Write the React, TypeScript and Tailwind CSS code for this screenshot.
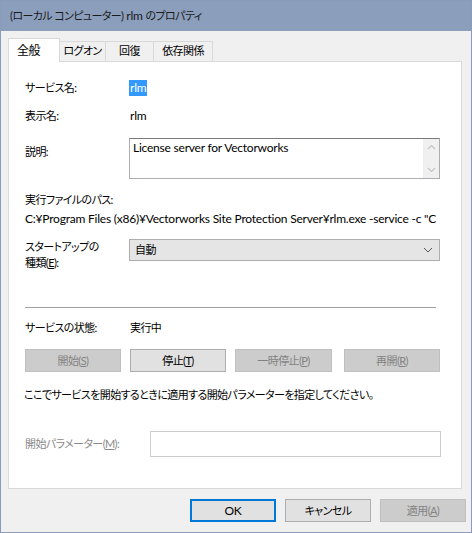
import React from "react";

const F: React.CSSProperties = { fontFamily: 'Lato, "Noto Sans CJK JP", sans-serif', fontFeatureSettings: '"palt"' };

function L({ children }: { children: React.ReactNode }) {
  return <span className="text-[12px] tracking-[-0.22px]">{children}</span>;
}

function Btn({ children, disabled, primary, className = "" }: { children: React.ReactNode; disabled?: boolean; primary?: boolean; className?: string }) {
  const base = "flex items-center justify-center leading-none";
  const look = disabled
    ? "bg-[#cccccc] border border-[#bfbfbf] text-[#838383]"
    : primary
    ? "bg-[#e1e1e1] border-2 border-[#0078d7] text-black"
    : "bg-[#e1e1e1] border border-[#adadad] text-black";
  return <div className={`${base} ${look} ${className}`}>{children}</div>;
}

export default function App() {
  return (
    <div style={F} className="w-[472px] h-[533px] border border-[#8a9cba] bg-[#f0f0f0] flex flex-col text-[11px] tracking-[-0.6px] text-black overflow-hidden">
      <div className="h-[30px] shrink-0 bg-[#8b9ebc] flex items-center pl-[9px] text-[#1a1a1a]">
        (ローカル コンピューター) <L>&nbsp;rlm&nbsp;</L> のプロパティ
      </div>
      <div className="px-[7px] pt-[7px]">
        <div className="flex items-end h-[23px] relative z-10">
          <div className="w-[52px] h-[24px] bg-white border border-[#d9d9d9] border-b-0 flex items-center pl-[8px] -mb-px text-[12px]">全般</div>
          <div className="w-[46px] h-[20px] border border-[#d9d9d9] border-b-0 border-l-0 flex items-center justify-center">ログオン</div>
          <div className="w-[48px] h-[20px] border border-[#d9d9d9] border-b-0 border-l-0 flex items-center justify-center">回復</div>
          <div className="w-[59px] h-[20px] border border-[#d9d9d9] border-b-0 border-l-0 flex items-center justify-center">依存関係</div>
        </div>
        <div className="w-[454px] h-[428px] bg-white border border-[#d9d9d9] flex flex-col pl-[16px]">
          <div className="mt-[17px] h-[18px] flex items-center">
            <div className="w-[105px]">サービス名:</div>
            <div className="bg-[#3399ff] text-white h-[16px] flex items-center px-[1px] -ml-px"><L>rlm</L></div>
          </div>
          <div className="mt-[10px] h-[18px] flex items-center">
            <div className="w-[105px]">表示名:</div>
            <div><L>rlm</L></div>
          </div>
          <div className="mt-[13px] flex">
            <div className="w-[104px] pt-[6px]">説明:</div>
            <div className="w-[311px] h-[41px] border border-[#abadb3] border-t-[#7a7a7a] flex">
              <div className="flex-1 pl-[3px] pt-[1px] leading-[16px]"><L>License server for Vectorworks</L></div>
              <div className="w-[16px] bg-[#f0f0f0] flex flex-col items-center justify-between py-[5px]">
                <svg width="9" height="6" viewBox="0 0 9 6"><path d="M1 5 L4.5 1.5 L8 5" fill="none" stroke="#c5c5c5" strokeWidth="1.2" /></svg>
                <svg width="9" height="6" viewBox="0 0 9 6"><path d="M1 1 L4.5 4.5 L8 1" fill="none" stroke="#c5c5c5" strokeWidth="1.2" /></svg>
              </div>
            </div>
          </div>
          <div className="mt-[12px] h-[18px] flex items-center">実行ファイルのパス:</div>
          <div className="mt-[1px] h-[18px] flex items-center w-[415px] overflow-hidden whitespace-nowrap">
            <L>C:¥Program Files (x86)¥Vectorworks Site Protection Server¥rlm.exe -service -c "C</L>
          </div>
          <div className="mt-[11px] flex">
            <div className="w-[104px] leading-[16px]">
              スタートアップの<br />種類(<span className="underline">E</span>):
            </div>
            <div className="w-[311px] h-[22px] bg-[#e5e5e5] border border-[#adadad] flex items-center justify-between pl-[5px] pr-[6px]">
              <span>自動</span>
              <svg width="10" height="6" viewBox="0 0 10 6"><path d="M1 1 L5 5 L9 1" fill="none" stroke="#555" strokeWidth="1" /></svg>
            </div>
          </div>
          <div className="mt-[36px] w-[411px] h-px bg-[#a0a0a0]" />
          <div className="mt-[11px] h-[18px] flex items-center">
            <div className="w-[105px]">サービスの状態:</div>
            <div>実行中</div>
          </div>
          <div className="mt-[12px] flex">
            <Btn disabled className="w-[96px] h-[23px]">開始(<span className="underline">S</span>)</Btn>
            <Btn className="w-[96px] h-[23px] ml-[9px]">停止(<span className="underline">T</span>)</Btn>
            <Btn disabled className="w-[97px] h-[23px] ml-[9px]">一時停止(<span className="underline">P</span>)</Btn>
            <Btn disabled className="w-[96px] h-[23px] ml-[12px]">再開(<span className="underline">R</span>)</Btn>
          </div>
          <div className="mt-[14px] h-[18px] flex items-center -ml-px whitespace-nowrap">ここでサービスを開始するときに適用する開始パラメーターを指定してください。</div>
          <div className="mt-[27px] flex items-center">
            <div className="w-[125px] text-[#8a8a8a] whitespace-nowrap">開始パラメーター(<span className="underline">M</span>):</div>
            <div className="w-[291px] h-[26px] border border-[#cccccc] bg-white" />
          </div>
        </div>
        <div className="flex justify-end mt-[10px]">
          <Btn primary className="w-[86px] h-[23px]"><L>OK</L></Btn>
          <Btn className="w-[86px] h-[23px] ml-[9px]">キャンセル</Btn>
          <Btn disabled className="w-[86px] h-[23px] ml-[9px] -mr-[2px]">適用(<span className="underline">A</span>)</Btn>
        </div>
      </div>
    </div>
  );
}
